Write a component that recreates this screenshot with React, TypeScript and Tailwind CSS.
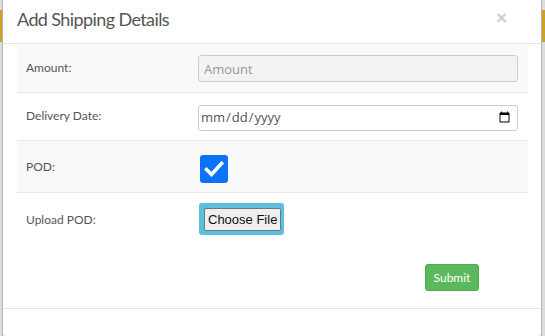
import React from "react";

export default function App() {
  const font = { fontFamily: '"Open Sans", "Liberation Sans", sans-serif' };
  const lato = { fontFamily: 'Lato, "Open Sans", sans-serif' };
  return (
    <div className="w-[545px] h-[336px] flex bg-[#e6e6e6] overflow-hidden" style={font}>
      <div className="w-[2px] flex flex-col bg-[#dcdcdc]">
        <div className="h-[10px]" />
        <div className="h-[32px] bg-[#c9a227]" />
      </div>
      <div className="w-[1px] bg-[#b5b5b5]" />
      <div className="w-[538px] h-[336px] bg-white flex flex-col rounded-b-[4px]">
        <div className="h-[44px] flex items-start justify-between pl-[14px] pr-[34px] border-b border-[#e5e5e5]">
          <div className="text-[18px] leading-[22px] tracking-[-0.6px] text-[#555] pt-[8px]" style={lato}>Add Shipping Details</div>
          <div className="text-[19px] leading-[20px] font-bold text-[#cfcfcf] pt-[8px]" style={{ fontFamily: '"Liberation Sans", sans-serif' }}>×</div>
        </div>
        <div className="pl-[14px] pr-[13px] flex flex-col">
          <div className="flex h-[49px] bg-[#f9f9f9] border-b border-[#e8e8e8]">
            <div className="w-[181px] pl-[9px] pt-[15px] text-[12px] text-[#555]" style={lato}>Amount:</div>
            <div className="flex-1 pr-[10px] pt-[11px]">
              <input
                placeholder="Amount"
                disabled
                className="w-full h-[27px] rounded-[3px] border border-[#ccc] bg-[#f3f3f3] px-[5px] text-[13px] placeholder-[#999] outline-none"
                style={font}
              />
            </div>
          </div>
          <div className="flex h-[48px] bg-white border-b border-[#e8e8e8]">
            <div className="w-[181px] pl-[9px] pt-[14px] text-[12px] text-[#555]" style={lato}>Delivery Date:</div>
            <div className="flex-1 pr-[10px] pt-[11px]">
              <input
                type="date"
                className="w-full h-[26px] rounded-[3px] border border-[#ccc] bg-white pl-[1px] pr-[4px] text-[13px] text-[#555] outline-none"
                style={font}
              />
            </div>
          </div>
          <div className="flex h-[52px] bg-[#f9f9f9] border-b border-[#e8e8e8]">
            <div className="w-[181px] pl-[9px] pt-[17px] text-[12px] text-[#555]" style={lato}>POD:</div>
            <div className="flex-1 pt-[14px] pl-[2px]">
              <div className="w-[28px] h-[28px] rounded-[3px] bg-[#0b74f6] flex items-center justify-center">
                <svg width="20" height="18" viewBox="0 0 20 18">
                  <path d="M2.5 9.5 L7.5 14.5 L17.5 3.5" fill="none" stroke="white" strokeWidth="3.6" strokeLinecap="square" />
                </svg>
              </div>
            </div>
          </div>
          <div className="flex h-[60px]">
            <div className="w-[181px] pl-[9px] pt-[18px] text-[12px] text-[#555]" style={lato}>Upload POD:</div>
            <div className="flex-1 pt-[10px] pl-[1px]">
              <div className="inline-flex rounded-[3px] bg-[#5bc0de] p-[5px] pr-[3px] pb-[4px]">
                <div
                  className="h-[23px] px-[3px] flex items-center bg-[#efefef] border border-[#767676] rounded-[2px] text-[13px] text-[#111]"
                  style={{ fontFamily: '"Liberation Sans", sans-serif' }}
                >
                  Choose File
                </div>
              </div>
            </div>
          </div>
          <div className="flex justify-end pr-[49px] pt-[11px]">
            <button className="w-[54px] h-[27px] rounded-[3px] bg-[#5cb85c] border border-[#4cae4c] text-white text-[12px]" style={lato}>
              Submit
            </button>
          </div>
        </div>
        <div className="mt-[17px] border-t border-[#e5e5e5]" />
      </div>
      <div className="w-[1px] bg-[#b5b5b5]" />
      <div className="flex-1 flex flex-col bg-[#dcdcdc]">
        <div className="h-[10px]" />
        <div className="h-[32px] bg-[#c9a227]" />
      </div>
    </div>
  );
}
